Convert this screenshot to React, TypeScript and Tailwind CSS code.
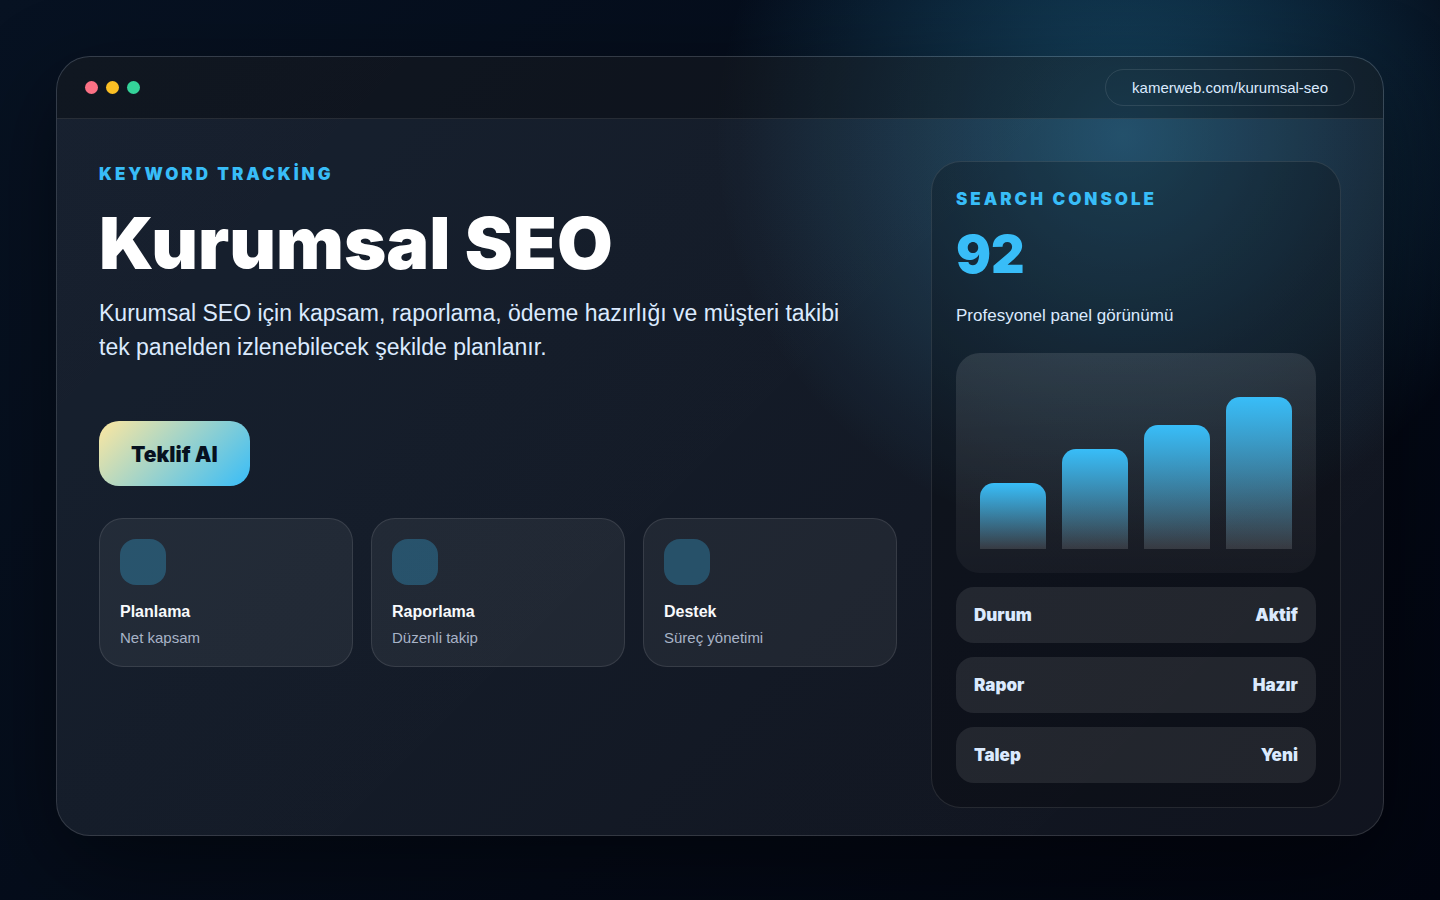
const features = [
  { title: "Planlama", text: "Net kapsam" },
  { title: "Raporlama", text: "Düzenli takip" },
  { title: "Destek", text: "Süreç yönetimi" },
];

const bars = [66, 100, 124, 152];

const statusRows = [
  { label: "Durum", value: "Aktif" },
  { label: "Rapor", value: "Hazır" },
  { label: "Talep", value: "Yeni" },
];

const Kicker = ({ children }: { children: string }) => (
  <p className="font-[Inter] text-[17px] leading-[26px] font-black tracking-[3px] text-[#38bdf8]">
    {children}
  </p>
);

const TitleBar = () => (
  <header className="flex h-[62px] items-center justify-between border-b border-white/10 bg-black/30 px-7">
    <div className="flex gap-2">
      <span className="size-[13px] rounded-full bg-[#fb7185]" />
      <span className="size-[13px] rounded-full bg-[#fbbf24]" />
      <span className="size-[13px] rounded-full bg-[#34d399]" />
    </div>
    <a
      href="#"
      className="rounded-full border border-white/10 px-[26px] py-2 text-[15px] leading-[19px] text-[#dbeafe]"
    >
      kamerweb.com/kurumsal-seo
    </a>
  </header>
);

const Chart = () => (
  <div className="flex h-[220px] items-end gap-4 rounded-3xl bg-[linear-gradient(180deg,rgba(255,255,255,0.11),rgba(255,255,255,0.04))] p-6">
    {bars.map((height) => (
      <div
        key={height}
        className="flex-1 rounded-t-[14px] bg-[linear-gradient(180deg,#38bdf8,rgba(255,255,255,0.13))]"
        style={{ height }}
      />
    ))}
  </div>
);

const App = () => {
  return (
    <div className="min-h-screen bg-[radial-gradient(circle_at_78%_15%,rgba(56,189,248,0.33),transparent_30%),linear-gradient(135deg,#071222,#020510)] p-14 font-['Liberation_Sans',Arial,sans-serif]">
      <main className="min-h-[780px] overflow-hidden rounded-[34px] border border-white/13 bg-[linear-gradient(135deg,rgba(255,255,255,0.07),rgba(255,255,255,0.06))] shadow-[0_30px_90px_rgba(0,0,0,0.45)]">
        <TitleBar />
        <div className="grid grid-cols-[minmax(0,1fr)_410px] gap-[34px] px-[42px] pt-[42px] pb-6">
          <section>
            <Kicker>KEYWORD TRACKİNG</Kicker>
            <h1 className="mt-4 font-[Inter] text-[72px] leading-[80px] font-black text-white">
              Kurumsal SEO
            </h1>
            <p className="mt-[13px] max-w-[760px] text-[23px] leading-[34px] text-[#dbeafe]">
              Kurumsal SEO için kapsam, raporlama, ödeme hazırlığı ve müşteri
              takibi tek panelden izlenebilecek şekilde planlanır.
            </p>
            <button
              type="button"
              className="mt-[57px] rounded-[20px] bg-[linear-gradient(135deg,#fde7a0,#38bdf8)] px-8 pt-[21px] pb-[18px] font-[Inter] text-[21px] leading-[26px] font-black text-[#07111f]"
            >
              Teklif Al
            </button>
            <div className="mt-8 grid grid-cols-3 gap-[18px]">
              {features.map((feature) => (
                <article
                  key={feature.title}
                  className="rounded-3xl border border-white/10 bg-white/6 px-5 pt-5 pb-[18px]"
                >
                  <div className="size-[46px] rounded-2xl bg-[rgba(56,189,248,0.28)]" />
                  <h2 className="mt-4 text-base leading-[22px] font-bold text-slate-50">
                    {feature.title}
                  </h2>
                  <p className="mt-[5px] text-[15px] leading-5 text-[#a8b3c7]">
                    {feature.text}
                  </p>
                </article>
              ))}
            </div>
          </section>
          <aside className="rounded-[30px] border border-white/10 bg-black/22 p-6">
            <Kicker>SEARCH CONSOLE</Kicker>
            <p className="mt-3 font-[Inter] text-[52px] leading-[62px] font-black text-[#38bdf8]">
              92
            </p>
            <p className="mt-[18px] mb-[25px] text-[17px] leading-6 text-[#dbeafe]">
              Profesyonel panel görünümü
            </p>
            <Chart />
            <dl>
              {statusRows.map((row) => (
                <div
                  key={row.label}
                  className="mt-3.5 flex h-14 items-center justify-between rounded-[18px] bg-white/9 px-[18px] font-[Inter] text-[17px] leading-6 font-black text-[#dbeafe]"
                >
                  <dt>{row.label}</dt>
                  <dd>{row.value}</dd>
                </div>
              ))}
            </dl>
          </aside>
        </div>
      </main>
    </div>
  );
};

export default App;
